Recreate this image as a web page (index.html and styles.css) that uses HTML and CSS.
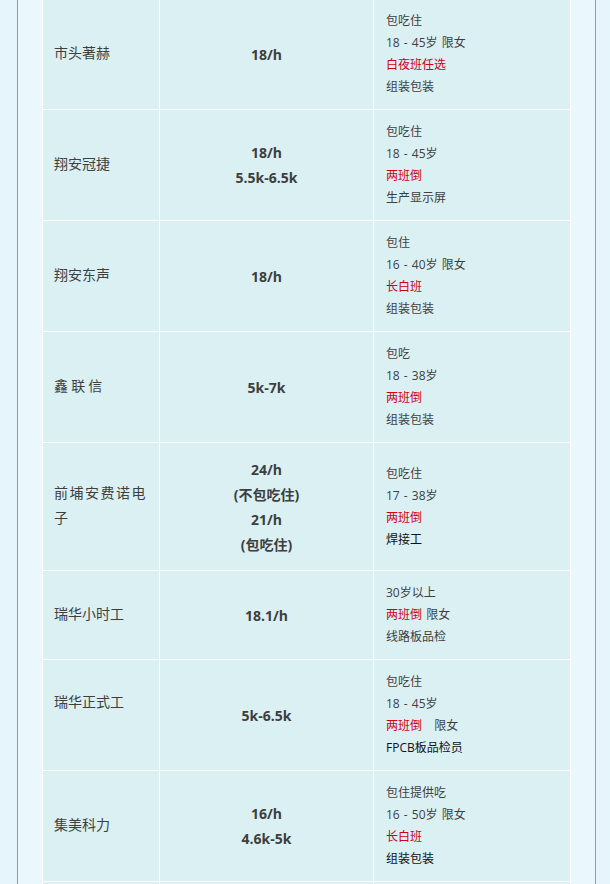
FILE: index.html
```html
<!DOCTYPE html>
<html lang="zh-CN">
<head>
<meta charset="utf-8">
<title>招聘信息</title>
<link rel="stylesheet" href="styles.css">
</head>
<body>
<div class="page">
  <div class="frame">
    <div class="table">
      <div class="cell name">市头著赫</div>
      <div class="cell pay"><p>18/h</p></div>
      <div class="cell info"><p>包吃住</p><p>18 - 45岁 限女</p><p class="red">白夜班任选</p><p>组装包装</p></div>

      <div class="cell name">翔安冠捷</div>
      <div class="cell pay"><p>18/h</p><p>5.5k-6.5k</p></div>
      <div class="cell info"><p>包吃住</p><p>18 - 45岁</p><p class="red">两班倒</p><p>生产显示屏</p></div>

      <div class="cell name">翔安东声</div>
      <div class="cell pay"><p>18/h</p></div>
      <div class="cell info"><p>包住</p><p>16 - 40岁 限女</p><p class="red">长白班</p><p>组装包装</p></div>

      <div class="cell name">鑫 联 信</div>
      <div class="cell pay"><p>5k-7k</p></div>
      <div class="cell info"><p>包吃</p><p>18 - 38岁</p><p class="red">两班倒</p><p>组装包装</p></div>

      <div class="cell name spaced">前埔安费诺电子</div>
      <div class="cell pay"><p>24/h</p><p>(不包吃住)</p><p>21/h</p><p>(包吃住)</p></div>
      <div class="cell info"><p>包吃住</p><p>17 - 38岁</p><p class="red">两班倒</p><p class="black">焊接工</p></div>

      <div class="cell name">瑞华小时工</div>
      <div class="cell pay"><p>18.1/h</p></div>
      <div class="cell info"><p>30岁以上</p><p><span class="red">两班倒</span> 限女</p><p>线路板品检</p></div>

      <div class="cell name"><p>瑞华正式工</p><p>&nbsp;</p></div>
      <div class="cell pay"><p>5k-6.5k</p></div>
      <div class="cell info"><p>包吃住</p><p>18 - 45岁</p><p><span class="red">两班倒</span>&nbsp;&nbsp; 限女</p><p class="black">FPCB板品检员</p></div>

      <div class="cell name">集美科力</div>
      <div class="cell pay"><p>16/h</p><p>4.6k-5k</p></div>
      <div class="cell info"><p>包住提供吃</p><p>16 - 50岁 限女</p><p class="red">长白班</p><p class="black">组装包装</p></div>

      <div class="cell name">&nbsp;</div>
      <div class="cell pay"><p>&nbsp;</p></div>
      <div class="cell info"><p>&nbsp;</p><p>&nbsp;</p><p>&nbsp;</p><p>&nbsp;</p></div>
    </div>
  </div>
</div>
</body>
</html>
```
FILE: styles.css
```css
html, body {
  margin: 0;
  padding: 0;
  background: #e6f5fc;
  overflow: hidden;
}

.page {
  padding: 0 14px 0 17px;
  font-family: "Open Sans", "Noto Sans CJK SC", sans-serif;
  color: #3f3f3f;
}

.frame {
  border-left: 1px solid #7e9cda;
  border-right: 1px solid #7e9cda;
  background: #eaf7fd;
  padding: 0 24px;
  min-height: 900px;
}

.table {
  margin-top: -2px;
  display: grid;
  grid-template-columns: 116px 213px 196px;
  gap: 1px;
  padding: 1px;
  background: #ffffff;
}

.cell {
  background: #dbf0f3;
  display: flex;
  flex-direction: column;
  justify-content: center;
}

.cell p {
  margin: 0;
}

.name {
  padding: 0 8px 3px 11px;
  font-size: 14px;
  line-height: 25px;
  font-family: "Noto Sans CJK SC", sans-serif;
}

.spaced {
  letter-spacing: 1.5px;
}

.pay {
  padding: 13.5px 8px;
  align-items: center;
  font-size: 14px;
  line-height: 25px;
  font-weight: 700;
  color: #3e3e3e;
}

.info {
  padding: 11px 8px 11px 12px;
  font-size: 12px;
  line-height: 22px;
  word-spacing: 1px;
}

.red {
  color: #cc0018;
}

.black {
  color: #111111;
}
```
